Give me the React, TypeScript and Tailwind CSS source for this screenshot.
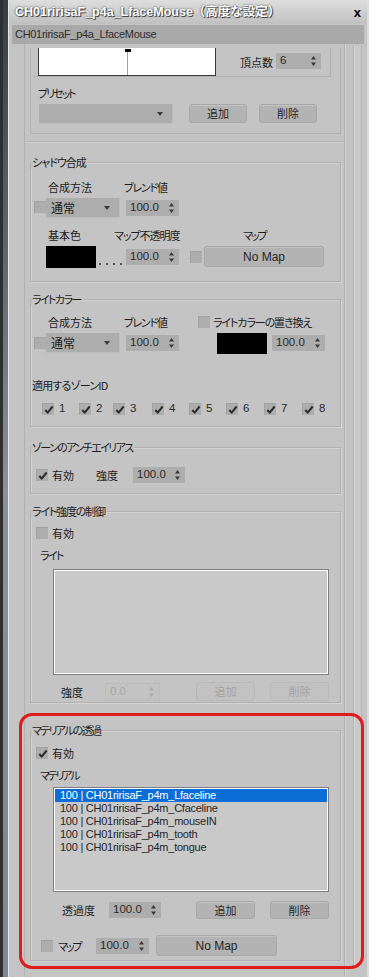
import React from 'react';

const jp =
  "font-['Noto_Sans_CJK_JP',sans-serif] [font-feature-settings:'palt'] text-[11px] leading-[14px] text-[#1c1c1c] whitespace-nowrap";
const num = "font-['Liberation_Sans',Arial,sans-serif] text-[11.5px] leading-none whitespace-nowrap";
const listText =
  "font-['Liberation_Sans',Arial,sans-serif] text-[11px] tracking-[-0.25px] leading-[13px] whitespace-nowrap";

function Tick() {
  return (
    <svg viewBox="0 0 12 12" className="w-[10px] h-[10px]">
      <path d="M1.6 6 L4.4 9.2 L10.4 1.8" stroke="#2c2c2c" strokeWidth="2.4" fill="none" strokeLinejoin="round" />
    </svg>
  );
}

function Arrows({ color = '#333' }: { color?: string }) {
  return (
    <svg viewBox="0 0 5 10" className="w-[5px] h-[10px] shrink-0">
      <path d="M2.5 0 L5 3.5 L0 3.5 Z M0 6.5 L5 6.5 L2.5 10 Z" fill={color} />
    </svg>
  );
}

function Cb({ on = false, className = '' }: { on?: boolean; className?: string }) {
  return (
    <div
      className={`w-[12px] h-[12px] shrink-0 bg-[#adadad] border-t border-l border-[#a2a2a2] flex items-center justify-center ${className}`}
    >
      {on && <Tick />}
    </div>
  );
}

function Spin({
  v,
  w,
  h = 'h-[16px]',
  off = false,
  className = '',
}: {
  v: string;
  w: string;
  h?: string;
  off?: boolean;
  className?: string;
}) {
  return (
    <div
      className={`${w} ${h} shrink-0 flex items-center justify-between pl-[4px] pr-[5px] ${
        off ? 'bg-[#c3c3c3] text-[#a6a6a6] border border-[#bcbcbc]' : 'bg-[#adadad] text-[#2a2a2a]'
      } ${className}`}
    >
      <span className={num}>{v}</span>
      <Arrows color={off ? '#ababab' : '#3a3a3a'} />
    </div>
  );
}

function Dropdown({ text = '', w, className = '' }: { text?: string; w: string; className?: string }) {
  return (
    <div
      className={`${w} h-[20px] shrink-0 flex items-center justify-between pl-[5px] pr-[9px] bg-[#adadad] border-r border-b border-[#bcbcbc] ${className}`}
    >
      <span className={`${jp} text-[12px]`}>{text}</span>
      <svg viewBox="0 0 6 4" className="w-[6px] h-[4px]">
        <path d="M0 0 L6 0 L3 4 Z" fill="#3a3a3a" />
      </svg>
    </div>
  );
}

function Btn({
  label,
  w,
  h = 'h-[19px]',
  off = false,
  latin = false,
  className = '',
}: {
  label: string;
  w: string;
  h?: string;
  off?: boolean;
  latin?: boolean;
  className?: string;
}) {
  return (
    <div
      className={`${w} ${h} shrink-0 flex items-center justify-center rounded-[3px] border ${
        off
          ? 'bg-[#c2c2c2] border-[#b9b9b9] text-[#a3a3a3]'
          : 'bg-[#b3b3b3] border-[#a8a8a8] shadow-[inset_0_1px_0_#c4c4c4] text-[#262626]'
      } ${className}`}
    >
      <span
        className={
          latin
            ? "font-['Liberation_Sans',Arial,sans-serif] text-[12px] leading-none"
            : "font-['Noto_Sans_CJK_JP',sans-serif] text-[11px] leading-none"
        }
      >
        {label}
      </span>
    </div>
  );
}

function ListBox({ items = [], h }: { items?: string[]; h: string }) {
  return (
    <div
      className={`ml-[22px] w-[276px] ${h} border border-[#7e7e7e] bg-[#c9c9c9] shadow-[inset_0_0_0_1px_#ffffff] p-[1px]`}
    >
      {items.map((t, i) => (
        <div
          key={t}
          className={`h-[13px] pl-[5px] ${listText} ${i === 0 ? 'bg-[#0b6ed6] text-white' : 'text-[#262626]'}`}
        >
          {t}
        </div>
      ))}
    </div>
  );
}

function Group({
  label,
  tr = '',
  className = '',
  children,
}: {
  label: string;
  tr?: string;
  className?: string;
  children: React.ReactNode;
}) {
  return (
    <fieldset
      className={`ml-[5px] w-[311px] min-w-0 border border-[#b1b1b1] shadow-[1px_1px_0_#d3d3d3,inset_1px_1px_0_#d3d3d3] ${className}`}
    >
      <legend className={`${jp} ${tr} px-[1px] bg-[#c4c4c4]`}>{label}</legend>
      {children}
    </fieldset>
  );
}

const zoneWidths = ['w-[37px]', 'w-[34px]', 'w-[39px]', 'w-[37px]', 'w-[37px]', 'w-[38px]', 'w-[38px]', 'w-[24px]'];

const materials = [
  '100 | CH01ririsaF_p4m_Lfaceline',
  '100 | CH01ririsaF_p4m_Cfaceline',
  '100 | CH01ririsaF_p4m_mouseIN',
  '100 | CH01ririsaF_p4m_tooth',
  '100 | CH01ririsaF_p4m_tongue',
];

export default function App() {
  return (
    <div className="w-[369px] h-[977px] relative overflow-hidden flex bg-[#c4c4c4]">
      {/* desktop behind the window */}
      <div className="w-[3px] bg-[#2e2f31]" />
      <div className="w-[5px] bg-linear-to-b from-[#3a3c40] via-[#8a9198] to-[#7c8894]" />
      <div className="w-px bg-[#e6e6e6]" />

      <div className="flex-1 flex flex-col bg-[#c4c4c4] border-r-2 border-[#dcdcdc]">
        {/* title bar */}
        <div className="h-[24px] shrink-0 flex items-center justify-between bg-linear-to-b from-[#dedede] to-[#c0c0c0] pl-[6px] pr-[6px]">
          <span className="font-['Liberation_Sans','Noto_Sans_CJK_JP',sans-serif] font-bold text-[12.5px] text-white [text-shadow:0_0_2px_#2a2a2a,1px_1px_0_#555] whitespace-nowrap">
            CH01ririsaF_p4a_LfaceMouse（高度な設定）
          </span>
          <span className="font-['Liberation_Sans',Arial,sans-serif] font-bold text-[13px] text-black leading-none">x</span>
        </div>

        {/* name bar */}
        <div className="mt-[1px] ml-[3px] w-[352px] h-[19px] shrink-0 flex items-center bg-[#a9a9a9] pl-[3px]">
          <span className="font-['Liberation_Sans',Arial,sans-serif] text-[11px] tracking-[-0.3px] text-[#2e2e2e] whitespace-nowrap">
            CH01ririsaF_p4a_LfaceMouse
          </span>
        </div>

        {/* body */}
        <div className="flex-1 flex min-h-0">
          <div className="w-[15px] shrink-0" />

          {/* rollout */}
          <div className="w-[321px] shrink-0 border-l border-r border-[#b1b1b1] shadow-[1px_0_0_#d3d3d3] pt-[4px] flex flex-col overflow-hidden">
            {/* curve / preset section (scrolled) */}
            <div className="ml-[5px] w-[311px] border-l border-r border-b border-[#b1b1b1] pb-[9px]">
              <div className="ml-[2px] w-[298px] h-[29px] border-r border-b border-[#b1b1b1] flex items-center">
                <div className="ml-[5px] w-[178px] h-[28px] self-start bg-white border-l border-r border-b border-[#3a3a3a] relative">
                  <div className="absolute left-[86px] top-[1px] w-[6px] h-[3px] bg-black" />
                  <div className="absolute left-[88px] top-[4px] bottom-0 w-px bg-[#a0a0a0]" />
                </div>
                <span className={`${jp} ml-[24px]`}>頂点数</span>
                <Spin v="6" w="w-[45px]" className="ml-[3px] -mt-[3px]" />
              </div>
              <div className={`${jp} tracking-[-2px] mt-[9px] ml-[7px]`}>プリセット</div>
              <div className="mt-[4px] flex items-center">
                <Dropdown w="w-[134px]" className="ml-[8px]" />
                <Btn label="追加" w="w-[58px]" className="ml-[16px] -mt-[1px]" />
                <Btn label="削除" w="w-[58px]" className="ml-[12px] -mt-[1px]" />
              </div>
            </div>
            <div className="mt-[7px] h-px shrink-0 bg-[#b1b1b1] shadow-[0_1px_0_#d3d3d3]" />

            {/* シャドウ合成 */}
            <Group label="シャドウ合成" tr="tracking-[-1px]" className="mt-[13px] pb-[13px]">
              <div className="mt-[11px] flex">
                <span className={`${jp} ml-[17px] w-[76px]`}>合成方法</span>
                <span className={`${jp} tracking-[-1.2px]`}>ブレンド値</span>
              </div>
              <div className="mt-[4px] h-[20px] flex items-center">
                <Cb className="ml-[3px] -mt-[2px]" />
                <Dropdown text="通常" w="w-[74px]" />
                <Spin v="100.0" w="w-[53px]" className="ml-[6px]" />
              </div>
              <div className="mt-[10px] flex">
                <span className={`${jp} ml-[17px] w-[66px]`}>基本色</span>
                <span className={`${jp} tracking-[-1px] w-[129px]`}>マップ不透明度</span>
                <span className={`${jp} tracking-[-2px]`}>マップ</span>
              </div>
              <div className="mt-[3px] h-[23px] flex items-center">
                <div className="ml-[15px] w-[50px] h-[22px] bg-black shrink-0" />
                <div className="w-[30px] h-[22px] shrink-0 flex items-end pb-[3px] pl-[3px] gap-[5px]">
                  <div className="w-[2px] h-[2px] bg-[#555]" />
                  <div className="w-[2px] h-[2px] bg-[#555]" />
                  <div className="w-[2px] h-[2px] bg-[#555]" />
                  <div className="w-[2px] h-[2px] bg-[#555]" />
                </div>
                <Spin v="100.0" w="w-[53px]" />
                <Cb className="ml-[11px]" />
                <Btn label="No Map" latin w="w-[120px]" h="h-[21px]" className="ml-[2px]" />
              </div>
            </Group>

            {/* ライトカラー (with zone IDs) */}
            <Group label="ライトカラー" tr="tracking-[-1.6px]" className="mt-[10px] pb-[11px]">
              <div className="mt-[9px] flex items-center">
                <span className={`${jp} ml-[17px] w-[76px]`}>合成方法</span>
                <span className={`${jp} tracking-[-1.2px] w-[74px]`}>ブレンド値</span>
                <Cb />
                <span className={`${jp} tracking-[-1.1px] ml-[3px]`}>ライトカラーの置き換え</span>
              </div>
              <div className="mt-[3px] h-[22px] flex items-center">
                <Cb className="ml-[3px]" />
                <Dropdown text="通常" w="w-[74px]" />
                <Spin v="100.0" w="w-[53px]" className="ml-[6px]" />
                <div className="ml-[38px] w-[50px] h-[21px] bg-black shrink-0" />
                <Spin v="100.0" w="w-[53px]" className="ml-[5px]" />
              </div>
              <div className={`${jp} tracking-[-0.8px] mt-[24px] ml-[1px]`}>適用するゾーンID</div>
              <div className="mt-[11px] h-[12px] flex items-center pl-[11px]">
                {zoneWidths.map((w, i) => (
                  <div key={i} className={`${w} shrink-0 flex items-center`}>
                    <Cb on />
                    <span className={`${num} ml-[5px] text-[#2a2a2a]`}>{i + 1}</span>
                  </div>
                ))}
              </div>
            </Group>

            {/* ゾーンのアンチエイリアス */}
            <Group label="ゾーンのアンチエイリアス" tr="tracking-[-1.6px]" className="mt-[13px] pb-[10px]">
              <div className="mt-[13px] h-[16px] flex items-center">
                <Cb on className="ml-[5px]" />
                <span className={`${jp} ml-[4px] w-[44px]`}>有効</span>
                <span className={`${jp} w-[37px]`}>強度</span>
                <Spin v="100.0" w="w-[52px]" />
              </div>
            </Group>

            {/* ライト強度の制御 */}
            <Group label="ライト強度の制御" tr="tracking-[-1.2px]" className="mt-[10px] pb-[1px]">
              <div className="mt-[8px] h-[13px] flex items-center">
                <Cb className="ml-[5px]" />
                <span className={`${jp} ml-[4px]`}>有効</span>
              </div>
              <div className={`${jp} tracking-[-1.6px] mt-[9px] ml-[9px]`}>ライト</div>
              <div className="mt-[7px]">
                <ListBox h="h-[106px]" />
              </div>
              <div className="mt-[7px] h-[19px] flex items-center">
                <span className={`${jp} ml-[30px] w-[44px]`}>強度</span>
                <Spin v="0.0" w="w-[55px]" h="h-[18px]" off />
                <Btn label="追加" w="w-[59px]" off className="ml-[36px]" />
                <Btn label="削除" w="w-[59px]" off className="ml-[15px]" />
              </div>
            </Group>

            {/* マテリアルの透過 */}
            <Group label="マテリアルの透過" tr="tracking-[-1.7px]" className="mt-[20px] pb-[4px]">
              <div className="mt-[10px] h-[12px] flex items-center">
                <Cb on className="ml-[5px]" />
                <span className={`${jp} ml-[4px]`}>有効</span>
              </div>
              <div className={`${jp} tracking-[-2.2px] mt-[9px] ml-[9px]`}>マテリアル</div>
              <div className="mt-[5px]">
                <ListBox h="h-[105px]" items={materials} />
              </div>
              <div className="mt-[9px] h-[18px] flex items-center">
                <span className={`${jp} ml-[31px] w-[47px]`}>透過度</span>
                <Spin v="100.0" w="w-[52px]" />
                <Btn label="追加" w="w-[59px]" h="h-[18px]" className="ml-[35px]" />
                <Btn label="削除" w="w-[59px]" h="h-[18px]" className="ml-[15px]" />
              </div>
              <div className="mt-[16px] h-[21px] flex items-center">
                <Cb className="ml-[10px]" />
                <span className={`${jp} tracking-[-2px] ml-[5px] w-[38px]`}>マップ</span>
                <Spin v="100.0" w="w-[53px]" />
                <Btn label="No Map" latin w="w-[121px]" h="h-[21px]" className="ml-[7px]" />
              </div>
            </Group>
          </div>

          {/* scrollbar */}
          <div className="w-[8px] shrink-0" />
          <div className="w-[9px] shrink-0 mt-[2px] mb-[10px] bg-[#c9c9c9] border-l border-r border-[#b3b3b3] shadow-[inset_1px_0_0_#d6d6d6]" />
        </div>
      </div>

      {/* red highlight annotation */}
      <div className="absolute left-[19px] top-[713px] w-[345px] h-[256px] border-[3px] border-[#e01b1b] rounded-[13px] pointer-events-none" />
    </div>
  );
}
